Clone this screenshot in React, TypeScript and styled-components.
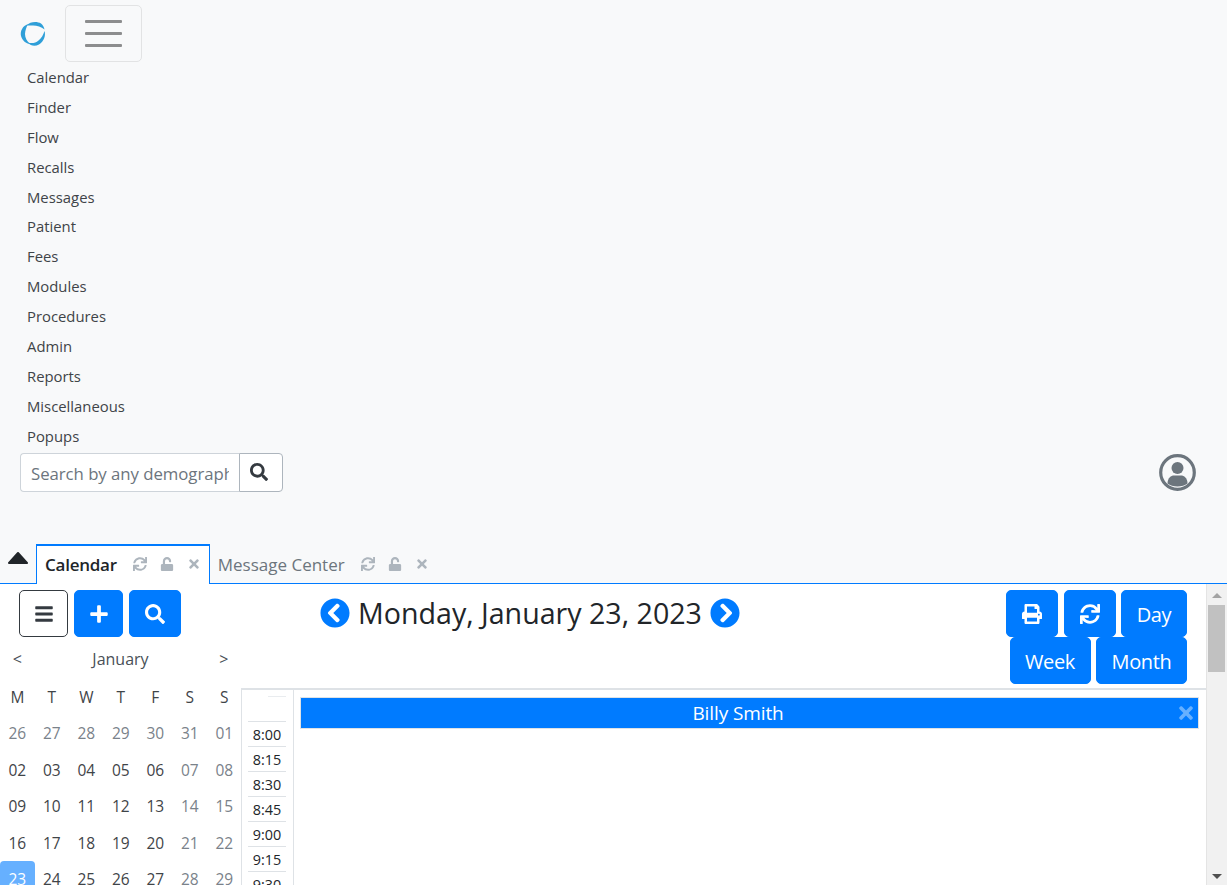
import React from 'react'
import styled, { createGlobalStyle } from 'styled-components'
import {
  FaBars,
  FaChevronCircleLeft,
  FaChevronCircleRight,
  FaPlus,
  FaPrint,
  FaSearch,
  FaSync,
  FaTimes,
  FaUnlock,
} from 'react-icons/fa'

const blue = '#007bff'

const GlobalStyle = createGlobalStyle`
  html, body {
    margin: 0;
    height: 885px;
    overflow: hidden;
    background: #fff;
  }
  body {
    font-family: "Open Sans", "Noto Sans", sans-serif;
    color: #212529;
  }
  * { box-sizing: border-box; }
`

const Page = styled.div`
  height: 885px;
  display: flex;
  flex-direction: column;
  overflow: hidden;
`

const Navbar = styled.nav`
  flex: 0 0 544px;
  background: #f8f9fa;
  padding: 5px 20px 0;
`

const Brand = styled.div`
  display: flex;
  align-items: center;
  gap: 19px;
  height: 57px;
`

const Toggler = styled.button`
  width: 77px;
  height: 57px;
  padding: 0;
  background: transparent;
  border: 1px solid #e2e3e4;
  border-radius: 5px;
  display: flex;
  flex-direction: column;
  align-items: center;
  justify-content: center;
  gap: 9px;
  span {
    display: block;
    width: 37px;
    height: 3px;
    border-radius: 1px;
    background: #8c8d8e;
  }
`

const NavList = styled.ul`
  list-style: none;
  margin: 0;
  padding: 0 0 0 7px;
`

const NavItem = styled.li`
  height: 29.9px;
  line-height: 30px;
  font-size: 14.85px;
  color: #3f4448;
`

const SearchRow = styled.div`
  display: flex;
  align-items: center;
  justify-content: space-between;
  padding-right: 11px;
  margin-top: 2.3px;
`

const SearchGroup = styled.form`
  display: flex;
  width: 263px;
  height: 39px;
`

const SearchInput = styled.input`
  width: 219px;
  height: 39px;
  padding: 2px 10px 0;
  background: #fff;
  border: 1px solid #ced4da;
  border-right: 0;
  border-radius: 4px 0 0 4px;
  font: 16.8px "Open Sans", sans-serif;
  letter-spacing: -0.05px;
  outline: none;
  &::placeholder { color: #6c757d; opacity: 1; }
`

const SearchButton = styled.button`
  width: 44px;
  height: 39px;
  padding: 0 4px 0 0;
  background: #fff;
  border: 1px solid #adb5bd;
  border-radius: 0 4px 4px 0;
  color: #343a40;
  font-size: 18px;
  display: flex;
  align-items: center;
  justify-content: center;
`

const Avatar = styled.svg`
  display: block;
  width: 37px;
  height: 37px;
  color: #6c757d;
`

const TabBar = styled.div`
  flex: 0 0 40px;
  display: flex;
  align-items: flex-start;
  background: #f8f9fa;
  border-bottom: 1px solid ${blue};
`

const Collapse = styled.div`
  width: 36px;
  padding: 8px 0 0 8px;
  line-height: 0;
`

const Tab = styled.div<{ $active?: boolean }>`
  display: flex;
  align-items: center;
  height: 40px;
  margin-bottom: -1px;
  padding: ${p => (p.$active ? '0 8px 2px 8px' : '0 8px 2px 7px')};
  font-size: 17px;
  letter-spacing: ${p => (p.$active ? '-0.25px' : '0')};
  font-weight: ${p => (p.$active ? 600 : 400)};
  color: ${p => (p.$active ? '#212529' : '#6c757d')};
  background: ${p => (p.$active ? '#fff' : 'transparent')};
  border-left: 1px solid ${p => (p.$active ? blue : 'transparent')};
  border-right: 1px solid ${p => (p.$active ? blue : 'transparent')};
  border-top: 2px solid ${p => (p.$active ? blue : 'transparent')};
`

const TabIcons = styled.span`
  display: flex;
  align-items: center;
  gap: 13px;
  margin-left: 16px;
  color: #adb5bd;
  font-size: 14px;
  svg { width: 14px; }
`

const Content = styled.div`
  flex: 1;
  display: flex;
  min-height: 0;
  overflow: hidden;
`

const Sidebar = styled.aside`
  flex: 0 0 241px;
  min-width: 0;
`

const SideTools = styled.div`
  display: flex;
  gap: 6px;
  padding: 6px 0 0 19px;
`

const Btn = styled.button<{ $width: number; $outline?: boolean }>`
  width: ${p => p.$width}px;
  height: 47px;
  padding: 1px 0 0;
  border-radius: 5px;
  border: 1px solid ${p => (p.$outline ? '#343a40' : blue)};
  background: ${p => (p.$outline ? '#fff' : blue)};
  color: ${p => (p.$outline ? '#343a40' : '#fff')};
  font: 20px "Open Sans", sans-serif;
  letter-spacing: -0.35px;
  display: flex;
  align-items: center;
  justify-content: center;
`

const MonthHead = styled.div`
  display: grid;
  grid-template-columns: 34.5px 1fr 34.5px;
  height: 44.5px;
  align-items: center;
  text-align: center;
  font-size: 16px;
  color: #495057;
`

const DayGrid = styled.div`
  display: grid;
  grid-template-columns: repeat(7, 34.5px);
  grid-auto-rows: 36.5px;
  margin-top: -3.2px;
`

const DayCell = styled.div<{ $muted?: boolean; $selected?: boolean }>`
  display: flex;
  align-items: center;
  justify-content: center;
  font-size: 15.5px;
  letter-spacing: -0.2px;
  border-radius: 4px;
  color: ${p => (p.$selected ? '#fff' : p.$muted ? '#7a828a' : '#3f4448')};
  background: ${p => (p.$selected ? '#66b0ff' : 'transparent')};
`

const Main = styled.main`
  flex: 1;
  min-width: 0;
`

const MainHead = styled.div`
  display: flex;
  height: 104px;
  padding-right: 19px;
`

const DateTitle = styled.div`
  flex: 0 0 578px;
  height: 57px;
  display: flex;
  align-items: center;
  justify-content: center;
  gap: 8px;
  font-size: 28.6px;
  color: #212529;
  svg { color: ${blue}; font-size: 30px; flex: none; }
`

const ViewButtons = styled.div`
  flex: 0 0 182px;
  margin-left: auto;
  display: flex;
  flex-wrap: wrap;
  justify-content: flex-end;
  align-content: flex-start;
  column-gap: 5.5px;
  padding-top: 6px;
`

const CalBody = styled.div`
  display: flex;
  height: 197px;
  border-top: 2px solid #dee2e6;
  border-left: 1px solid #dee2e6;
`

const TimeCol = styled.div`
  flex: 0 0 52px;
  padding: 6px 7px 0 6px;
  border-right: 1px solid #dee2e6;
`

const TimeHead = styled.div`
  height: 25px;
  margin-left: 20px;
  border-top: 1px solid #e9ecef;
`

const TimeCell = styled.div`
  height: 25px;
  border-top: 1px solid #dee2e6;
  font-size: 14.4px;
  line-height: 26px;
  text-align: center;
  color: #212529;
`

const Columns = styled.div`
  flex: 1;
  padding: 7px 7px 0 6px;
`

const Provider = styled.div`
  position: relative;
  height: 32px;
  padding-right: 23px;
  background: ${blue};
  border: 1px solid #dee2e6;
  color: #fff;
  font-size: 19px;
  letter-spacing: -0.1px;
  line-height: 31px;
  text-align: center;
`

const ProviderClose = styled.span`
  position: absolute;
  right: 2px;
  top: 5px;
  line-height: 0;
  font-size: 20px;
  color: #66b0ff;
`

const Scrollbar = styled.div`
  flex: 0 0 21px;
  position: relative;
  background: #f1f1f1;
  border-left: 1px solid #e4e4e4;
`

const Thumb = styled.div`
  position: absolute;
  top: 21px;
  left: 1px;
  right: 2px;
  height: 67px;
  background: #c1c1c1;
`

const Arrow = styled.span<{ $down?: boolean }>`
  position: absolute;
  left: 5px;
  ${p => (p.$down ? 'bottom: 6px;' : 'top: 9px;')}
  border-left: 5px solid transparent;
  border-right: 5px solid transparent;
  ${p => (p.$down ? 'border-top: 5px solid #505050;' : 'border-bottom: 5px solid #a3a3a3;')}
`

const menu = ['Calendar', 'Finder', 'Flow', 'Recalls', 'Messages', 'Patient', 'Fees', 'Modules', 'Procedures', 'Admin', 'Reports', 'Miscellaneous', 'Popups']
const weekdays = ['M', 'T', 'W', 'T', 'F', 'S', 'S']
const days = [
  '26', '27', '28', '29', '30', '31', '01',
  '02', '03', '04', '05', '06', '07', '08',
  '09', '10', '11', '12', '13', '14', '15',
  '16', '17', '18', '19', '20', '21', '22',
  '23', '24', '25', '26', '27', '28', '29',
]
const times = ['8:00', '8:15', '8:30', '8:45', '9:00', '9:15', '9:30']

const Logo = () => (
  <svg width="26" height="26" viewBox="0 0 26 26" fill="#2f9fd8">
    <path d="M8 3 C2.5 5 0 10 1 15 C2.5 20 6 22.5 10 23 C7 20 5 17 5 13 C5.2 9 6.5 6 8 3 Z" />
    <path d="M6.5 4.5 C10 0.5 17 0 21 2.5 C23 4 24 6 24.5 8.5 C21 5.5 15.5 4 11.5 4.5 C9.5 4.6 8 4.6 6.5 4.5 Z" />
    <path d="M24.5 10 C26 14.5 24 20.5 19 23.5 C15 25.8 10.5 25 8 21.5 C12 22.8 15.5 22 18.5 19.5 C21.5 17 23.5 13.5 24.5 10 Z" />
  </svg>
)

const CollapseCaret = () => (
  <svg width="20" height="12" viewBox="0 0 20 12" fill="#212529" stroke="#212529" strokeWidth="2" strokeLinejoin="round">
    <path d="M10 1 L19 11 L1 11 Z" />
  </svg>
)

const App = () => (
  <Page>
    <GlobalStyle />
    <Navbar>
      <Brand>
        <Logo />
        <Toggler type="button" aria-label="Toggle navigation">
          <span />
          <span />
          <span />
        </Toggler>
      </Brand>
      <NavList>
        {menu.map(item => (
          <NavItem key={item}>{item}</NavItem>
        ))}
      </NavList>
      <SearchRow>
        <SearchGroup>
          <SearchInput placeholder="Search by any demographics" />
          <SearchButton type="button" aria-label="Search"><FaSearch /></SearchButton>
        </SearchGroup>
        <Avatar viewBox="0 0 37 37" fill="currentColor">
          <circle cx="18.5" cy="18.5" r="16.8" fill="none" stroke="currentColor" strokeWidth="3.2" />
          <circle cx="18.5" cy="14" r="6" />
          <path d="M8.5 29.5 C8.5 24 12 21.5 15 21.5 H22 C25 21.5 28.5 24 28.5 29.5 C26 31.5 22.5 32.5 18.5 32.5 C14.5 32.5 11 31.5 8.5 29.5 Z" />
        </Avatar>
      </SearchRow>
    </Navbar>
    <TabBar>
      <Collapse><CollapseCaret /></Collapse>
      <Tab $active>
        Calendar
        <TabIcons><FaSync /><FaUnlock /><FaTimes /></TabIcons>
      </Tab>
      <Tab>
        Message Center
        <TabIcons><FaSync /><FaUnlock /><FaTimes /></TabIcons>
      </Tab>
    </TabBar>
    <Content>
      <Sidebar>
        <SideTools>
          <Btn $width={49} $outline aria-label="Menu"><FaBars /></Btn>
          <Btn $width={49} aria-label="Add"><FaPlus /></Btn>
          <Btn $width={52} aria-label="Search"><FaSearch /></Btn>
        </SideTools>
        <MonthHead>
          <span>&lt;</span>
          <span>January</span>
          <span>&gt;</span>
        </MonthHead>
        <DayGrid>
          {weekdays.map((d, i) => (
            <DayCell key={i}>{d}</DayCell>
          ))}
          {days.map((d, i) => (
            <DayCell key={i} $muted={i < 7 || i % 7 > 4} $selected={i === 28}>{d}</DayCell>
          ))}
        </DayGrid>
      </Sidebar>
      <Main>
        <MainHead>
          <DateTitle>
            <FaChevronCircleLeft />
            Monday, January 23, 2023
            <FaChevronCircleRight />
          </DateTitle>
          <ViewButtons>
            <Btn $width={52} aria-label="Print"><FaPrint /></Btn>
            <Btn $width={52} aria-label="Refresh"><FaSync /></Btn>
            <Btn $width={66}>Day</Btn>
            <Btn $width={81}>Week</Btn>
            <Btn $width={91}>Month</Btn>
          </ViewButtons>
        </MainHead>
        <CalBody>
          <TimeCol>
            <TimeHead />
            {times.map(t => (
              <TimeCell key={t}>{t}</TimeCell>
            ))}
          </TimeCol>
          <Columns>
            <Provider>
              Billy Smith
              <ProviderClose><FaTimes /></ProviderClose>
            </Provider>
          </Columns>
        </CalBody>
      </Main>
      <Scrollbar>
        <Arrow />
        <Thumb />
        <Arrow $down />
      </Scrollbar>
    </Content>
  </Page>
)

export default App
